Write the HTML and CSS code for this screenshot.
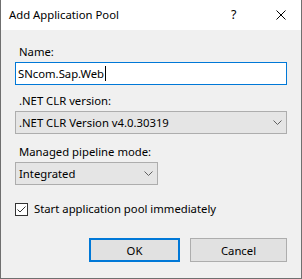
FILE: index.html
```html
<!DOCTYPE html>
<html lang="en">
<head>
  <meta charset="UTF-8">
  <title>Add Application Pool</title>
  <link rel="stylesheet" href="styles.css">
</head>
<body>
  <div class="dialog">
    <div class="titlebar">
      <span class="title">Add Application Pool</span>
      <span class="help">?</span>
      <svg class="close" width="10" height="10" viewBox="0 0 10 10">
        <path d="M0.5 0.5 L9.5 9.5 M9.5 0.5 L0.5 9.5" stroke="#000" stroke-width="1"/>
      </svg>
    </div>

    <div class="content">
      <div class="field field-name">
        <label>Name:</label>
        <div class="textbox">SNcom.Sap.Web<span class="caret"></span></div>
      </div>

      <div class="field field-clr">
        <label>.NET CLR version:</label>
        <div class="combo">
          <span>.NET CLR Version v4.0.30319</span>
          <svg class="chevron" width="9" height="5" viewBox="0 0 9 5">
            <polyline points="0.5,0.5 4.5,4.5 8.5,0.5" fill="none" stroke="#606060" stroke-width="1"/>
          </svg>
        </div>
      </div>

      <div class="field">
        <label>Managed pipeline mode:</label>
        <div class="combo combo-small">
          <span>Integrated</span>
          <svg class="chevron" width="9" height="5" viewBox="0 0 9 5">
            <polyline points="0.5,0.5 4.5,4.5 8.5,0.5" fill="none" stroke="#606060" stroke-width="1"/>
          </svg>
        </div>
      </div>

      <div class="check">
        <span class="box">
          <svg width="11" height="11" viewBox="0 0 11 11">
            <polyline points="1.5,5.5 4,8 9.5,2.5" fill="none" stroke="#333" stroke-width="1"/>
          </svg>
        </span>
        <span>Start application pool immediately</span>
      </div>

      <div class="buttons">
        <button class="btn btn-default">OK</button>
        <button class="btn btn-cancel">Cancel</button>
      </div>
    </div>
  </div>
</body>
</html>
```

FILE: styles.css
```css
html, body {
  margin: 0;
  padding: 0;
}
body {
  font-family: "Noto Sans", "Open Sans", sans-serif;
  font-size: 11.3px;
  line-height: 16px;
  color: #000;
  background: #fff;
}
.dialog {
  width: 302px;
  height: 279px;
  box-sizing: border-box;
  border: 1px solid #6f6f6f;
  border-top: none;
  background: #f0f0f0;
  display: flex;
  flex-direction: column;
}
.titlebar {
  height: 30px;
  flex-shrink: 0;
  background: #fff;
  display: flex;
  align-items: center;
  padding-left: 8px;
}
.title {
  flex: 1;
}
.help {
  width: 6px;
  margin-right: 39px;
  font-size: 12.5px;
}
.close {
  margin-right: 15px;
}
.content {
  padding: 14px 14px 0 14px;
}
.field {
  display: flex;
  flex-direction: column;
}
.field-name {
  margin-bottom: 8px;
}
.field-clr {
  margin-bottom: 10px;
}
.field label {
  height: 16px;
  padding-left: 4px;
  margin-bottom: 2px;
}
.textbox {
  height: 23px;
  box-sizing: border-box;
  border: 1px solid #0078d7;
  background: #fff;
  padding-left: 2px;
  display: flex;
  align-items: center;
}
.caret {
  display: inline-block;
  width: 1px;
  height: 15px;
  background: #000;
  margin-left: 1px;
}
.combo {
  height: 23px;
  box-sizing: border-box;
  border: 1px solid #adadad;
  background: #e5e5e5;
  display: flex;
  align-items: center;
  justify-content: space-between;
  padding: 0 4px 0 3px;
}
.combo-small {
  width: 143px;
}
.check {
  display: flex;
  align-items: center;
  gap: 6px;
  height: 16px;
  margin-top: 16px;
}
.box {
  width: 13px;
  height: 13px;
  box-sizing: border-box;
  border: 1px solid #333;
  background: #fff;
  display: flex;
  align-items: center;
  justify-content: center;
}
.buttons {
  display: flex;
  justify-content: flex-end;
  gap: 10px;
  margin-top: 21px;
}
.btn {
  height: 24px;
  box-sizing: border-box;
  font-family: inherit;
  font-size: 11.3px;
  color: #000;
  background: #e1e1e1;
  border: 1px solid #adadad;
  padding: 0;
  margin: 0;
}
.btn-default {
  width: 91px;
  border: 2px solid #0078d7;
}
.btn-cancel {
  width: 97px;
}
```
